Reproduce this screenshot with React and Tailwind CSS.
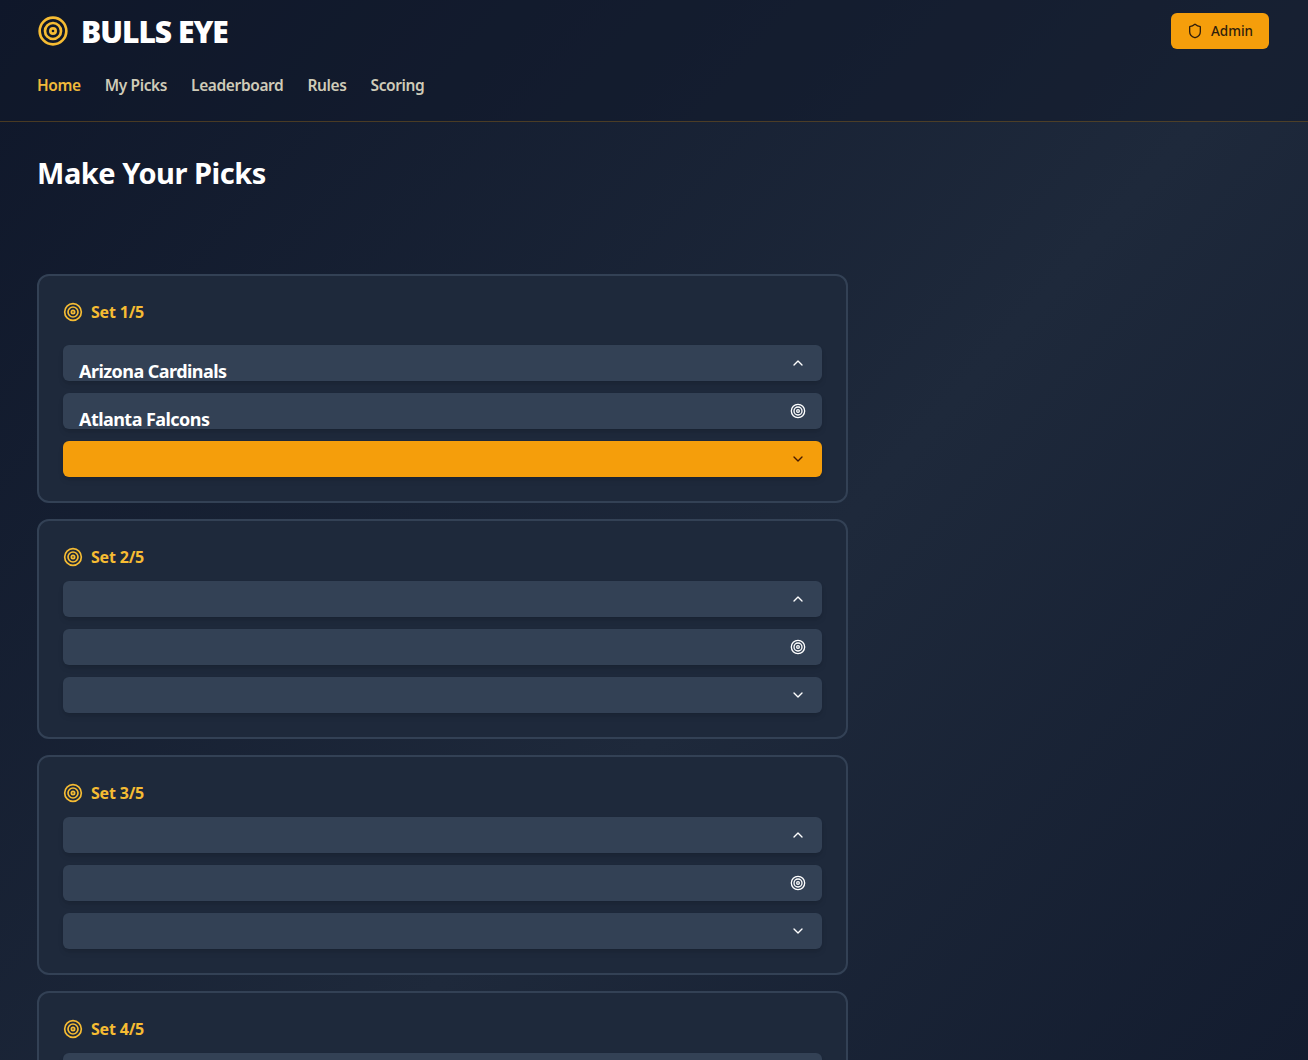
import React from "react";
import { Target, ChevronUp, ChevronDown, Shield } from "lucide-react";

function Row({ label, icon: Icon, active }) {
  return (
    <div className={`flex h-9 items-center justify-between rounded-md pl-4 pr-4 shadow-md ${active ? "bg-[#f59e0b] text-[#451a03]" : "bg-[#334155] text-white"}`}>
      <span className="translate-y-2 text-[18px] leading-5 font-bold tracking-[-0.55px] text-white">{label}</span>
      <Icon className="h-4 w-4 shrink-0" strokeWidth={2} />
    </div>
  );
}

function SetCard({ n, labels, active, first }) {
  return (
    <section className="rounded-xl border-2 border-[#334155] bg-[#1e293b] p-6">
      <div className={`mt-[2px] flex h-5 items-center gap-2 text-[#f6bc33] ${first ? "mb-[23px]" : "mb-[14px]"}`}>
        <Target className="h-5 w-5" strokeWidth={2} />
        <h2 className="text-[16px] leading-5 font-bold tracking-[-0.2px]">Set {n}/5</h2>
      </div>
      <div className="flex flex-col gap-3">
        <Row label={labels?.[0]} icon={ChevronUp} />
        <Row label={labels?.[1]} icon={Target} />
        <Row icon={ChevronDown} active={active} />
      </div>
    </section>
  );
}

export default function App() {
  return (
    <div className="min-h-screen bg-gradient-to-br from-[#0f172a] via-[#1e293b] to-[#0f172a] font-['Noto_Sans','Open_Sans',sans-serif] text-white">
      <header className="border-b border-[#f59e0b]/25 bg-[#0f172a]/50 px-[37px] pt-[13px] pb-[23px]">
        <div className="flex items-start justify-between pr-[2px]">
          <div className="flex h-9 items-center gap-[12px]">
            <Target className="h-8 w-8 text-[#f6bc33]" strokeWidth={2} />
            <h1 className="translate-y-px text-[30px] leading-9 font-black tracking-[-1px]">BULLS EYE</h1>
          </div>
          <button className="flex h-9 w-[98px] items-center justify-center gap-2 rounded-md bg-[#f59e0b] text-[13.5px] font-medium text-[#2f1d0c]">
            <Shield className="h-4 w-4" strokeWidth={2} />
            Admin
          </button>
        </div>
        <nav className="mt-[25px] flex h-6 items-center gap-6 text-[15.5px] font-semibold tracking-[-0.38px] text-[#cfcbb8]">
          <a className="text-[#f0b93a]">Home</a>
          <a>My Picks</a>
          <a>Leaderboard</a>
          <a>Rules</a>
          <a>Scoring</a>
        </nav>
      </header>
      <main className="px-[37px] pt-[33px] pb-8">
        <h1 className="text-[29px] leading-9 font-bold tracking-[-0.47px]">Make Your Picks</h1>
        <div className="mt-[83px] flex w-[811px] flex-col gap-4">
          <SetCard n={1} first active labels={["Arizona Cardinals", "Atlanta Falcons"]} />
          <SetCard n={2} />
          <SetCard n={3} />
          <SetCard n={4} />
          <SetCard n={5} />
        </div>
      </main>
    </div>
  );
}
